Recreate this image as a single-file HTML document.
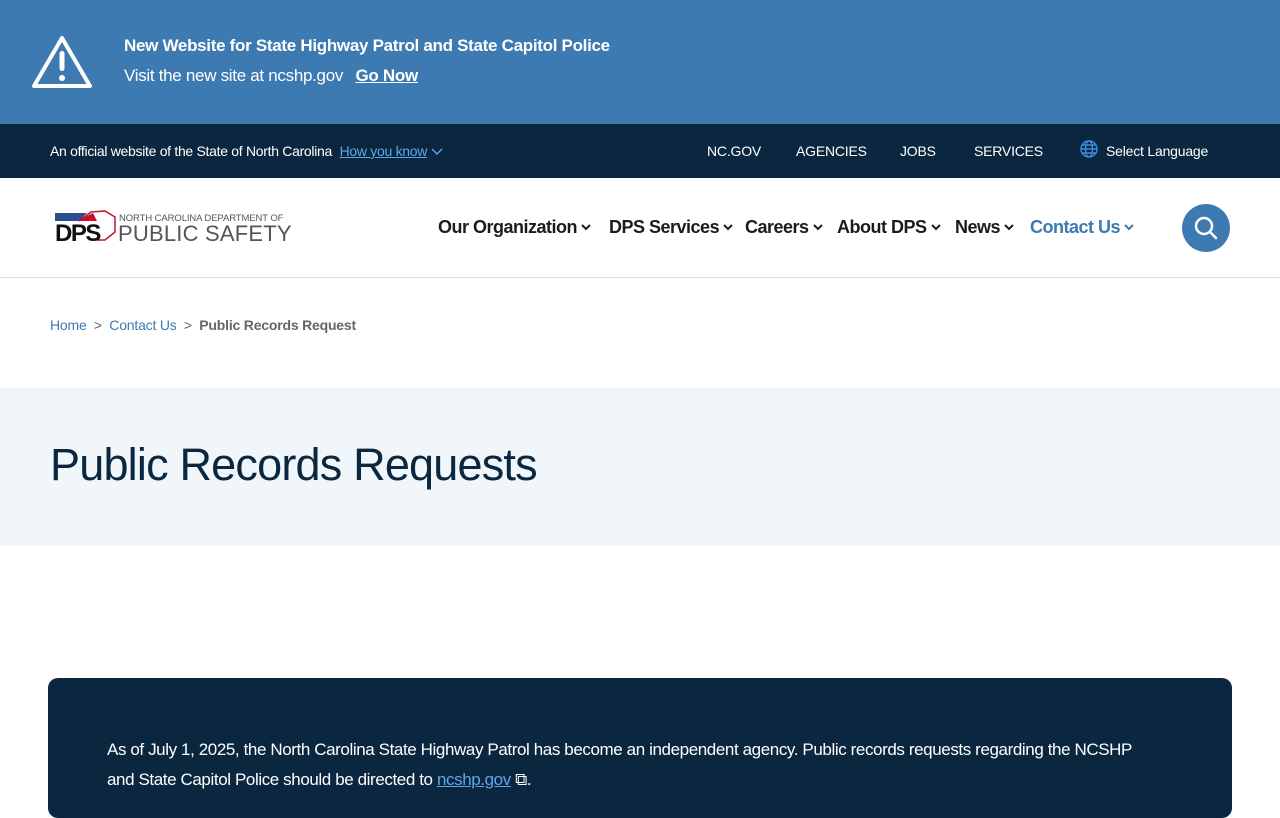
<!DOCTYPE html>
<html><head><meta charset="utf-8"><style>
*{margin:0;padding:0;box-sizing:border-box}
body{width:1280px;height:800px;overflow:hidden;font-family:"Liberation Sans",sans-serif;background:#fff;color:#1b1b1b}
.alert{position:absolute;left:0;top:0;width:1280px;height:124px;background:#3e7ab2;color:#fff}
.alert svg{position:absolute;left:31px;top:35px}
.alert .t1{position:absolute;left:124px;top:36px;font-size:17px;font-weight:bold;letter-spacing:-0.3px}
.alert .t2{position:absolute;left:124px;top:66px;font-size:17px;letter-spacing:-0.3px}
.alert .t2 b{margin-left:8px;text-decoration:underline}
.gov{position:absolute;top:124px;left:0;width:1280px;height:54px;background:#0b2740;color:#fff;font-size:14px}
.gov .l{position:absolute;left:50px;top:19px;letter-spacing:-0.3px}
.gov .l a{color:#5fa6e8;text-decoration:underline;margin-left:4px}
.gov .r{position:absolute;top:19px;letter-spacing:-0.2px}
.hdr{position:absolute;top:178px;left:0;width:1280px;height:100px;border-bottom:1px solid #ddd}
.nav{position:absolute;top:39px;font-size:18px;font-weight:bold;color:#1b1b1b;letter-spacing:-0.5px}
.nav span{position:absolute;white-space:nowrap}
.nav svg{margin-left:4px;vertical-align:2px}
.srch{position:absolute;left:1182px;top:26px;width:48px;height:48px;border-radius:50%;background:#3e7ab2}
.bc{position:absolute;top:317px;left:50px;font-size:14px;color:#666;letter-spacing:-0.2px}
.bc a{color:#3e7ab2}
.band{position:absolute;top:388px;left:0;width:1280px;height:158px;background:#f1f6fb}
.band h1{position:absolute;left:50px;top:51px;font-size:45px;font-weight:normal;color:#0b2740;letter-spacing:-0.8px}
.card{position:absolute;left:48px;top:678px;width:1184px;height:140px;background:#0b2740;border-radius:10px;color:#fff;font-size:17px;line-height:30px;padding:57px 80px 0 59px;letter-spacing:-0.4px}
.card a{color:#5fa6e8;text-decoration:underline}
</style></head><body>
<div class="alert">
<svg width="62" height="54" viewBox="0 0 62 54"><path d="M31 3 L59 51 H3 Z" fill="none" stroke="#fff" stroke-width="4" stroke-linejoin="round"/><rect x="28.5" y="16" width="5" height="20" rx="2.5" fill="#fff"/><circle cx="31" cy="43" r="3" fill="#fff"/></svg>
<div class="t1">New Website for State Highway Patrol and State Capitol Police</div>
<div class="t2">Visit the new site at ncshp.gov <b>Go Now</b></div>
</div>
<div class="gov">
<div class="l">An official website of the State of North Carolina <a>How you know</a> <svg width="12" height="8" viewBox="0 0 12 8" fill="none" stroke="#5fa6e8" stroke-width="1.4"><path d="M1 1l5 5 5-5"/></svg></div>
<div class="r" style="left:707px">NC.GOV</div>
<div class="r" style="left:796px">AGENCIES</div>
<div class="r" style="left:900px">JOBS</div>
<div class="r" style="left:974px">SERVICES</div>
<svg style="position:absolute;left:1080px;top:16px" width="18" height="18" viewBox="0 0 18 18" fill="none" stroke="#3e8be0" stroke-width="1.4"><circle cx="9" cy="9" r="8"/><ellipse cx="9" cy="9" rx="3.5" ry="8"/><path d="M1 9h16M2.5 5h13M2.5 13h13"/></svg>
<div class="r" style="left:1106px">Select Language</div>
</div>
<div class="hdr">
<svg style="position:absolute;left:55px;top:32px" width="62" height="34" viewBox="0 0 62 34"><path d="M0 3 L32 3 L24 11 L0 11Z" fill="#2a4e8f"/><path d="M24 11 L36 2 L50 1 L60 7 L60 22 L50 30 L42 30" fill="none" stroke="#c8102e" stroke-width="1.5"/><path d="M22 11 L38 3 L42 11Z" fill="#c8102e"/><text x="0" y="31" font-family="Liberation Sans" font-weight="bold" font-size="24" fill="#111" letter-spacing="-1.5">DPS</text></svg>
<div style="position:absolute;left:119px;top:35px;font-size:9.5px;color:#555;letter-spacing:-0.1px">NORTH CAROLINA DEPARTMENT OF</div>
<div style="position:absolute;left:118px;top:43px;font-size:22px;color:#555;letter-spacing:0.2px">PUBLIC SAFETY</div>
<div class="nav">
<span style="left:438px">Our Organization<svg width="10" height="7" viewBox="0 0 10 7" fill="none" stroke="#1b1b1b" stroke-width="2"><path d="M1 1l4 4 4-4"/></svg></span>
<span style="left:609px">DPS Services<svg width="10" height="7" viewBox="0 0 10 7" fill="none" stroke="#1b1b1b" stroke-width="2"><path d="M1 1l4 4 4-4"/></svg></span>
<span style="left:745px">Careers<svg width="10" height="7" viewBox="0 0 10 7" fill="none" stroke="#1b1b1b" stroke-width="2"><path d="M1 1l4 4 4-4"/></svg></span>
<span style="left:837px">About DPS<svg width="10" height="7" viewBox="0 0 10 7" fill="none" stroke="#1b1b1b" stroke-width="2"><path d="M1 1l4 4 4-4"/></svg></span>
<span style="left:955px">News<svg width="10" height="7" viewBox="0 0 10 7" fill="none" stroke="#1b1b1b" stroke-width="2"><path d="M1 1l4 4 4-4"/></svg></span>
<span style="left:1030px;color:#3e7ab2">Contact Us<svg width="10" height="7" viewBox="0 0 10 7" fill="none" stroke="#3e7ab2" stroke-width="2"><path d="M1 1l4 4 4-4"/></svg></span>
</div>
<div class="srch"><svg width="48" height="48" viewBox="0 0 48 48" fill="none" stroke="#fff" stroke-width="2.5"><circle cx="22" cy="22" r="8"/><path d="M28 28l6 6" stroke-linecap="round"/></svg></div>
</div>
<div class="bc"><a>Home</a> &nbsp;&gt;&nbsp; <a>Contact Us</a> &nbsp;&gt;&nbsp; <b>Public Records Request</b></div>
<div class="band"><h1>Public Records Requests</h1></div>
<div class="card">As of July 1, 2025, the North Carolina State Highway Patrol has become an independent agency. Public records requests regarding the NCSHP and State Capitol Police should be directed to <a>ncshp.gov</a> ⧉.</div>
</body></html>
